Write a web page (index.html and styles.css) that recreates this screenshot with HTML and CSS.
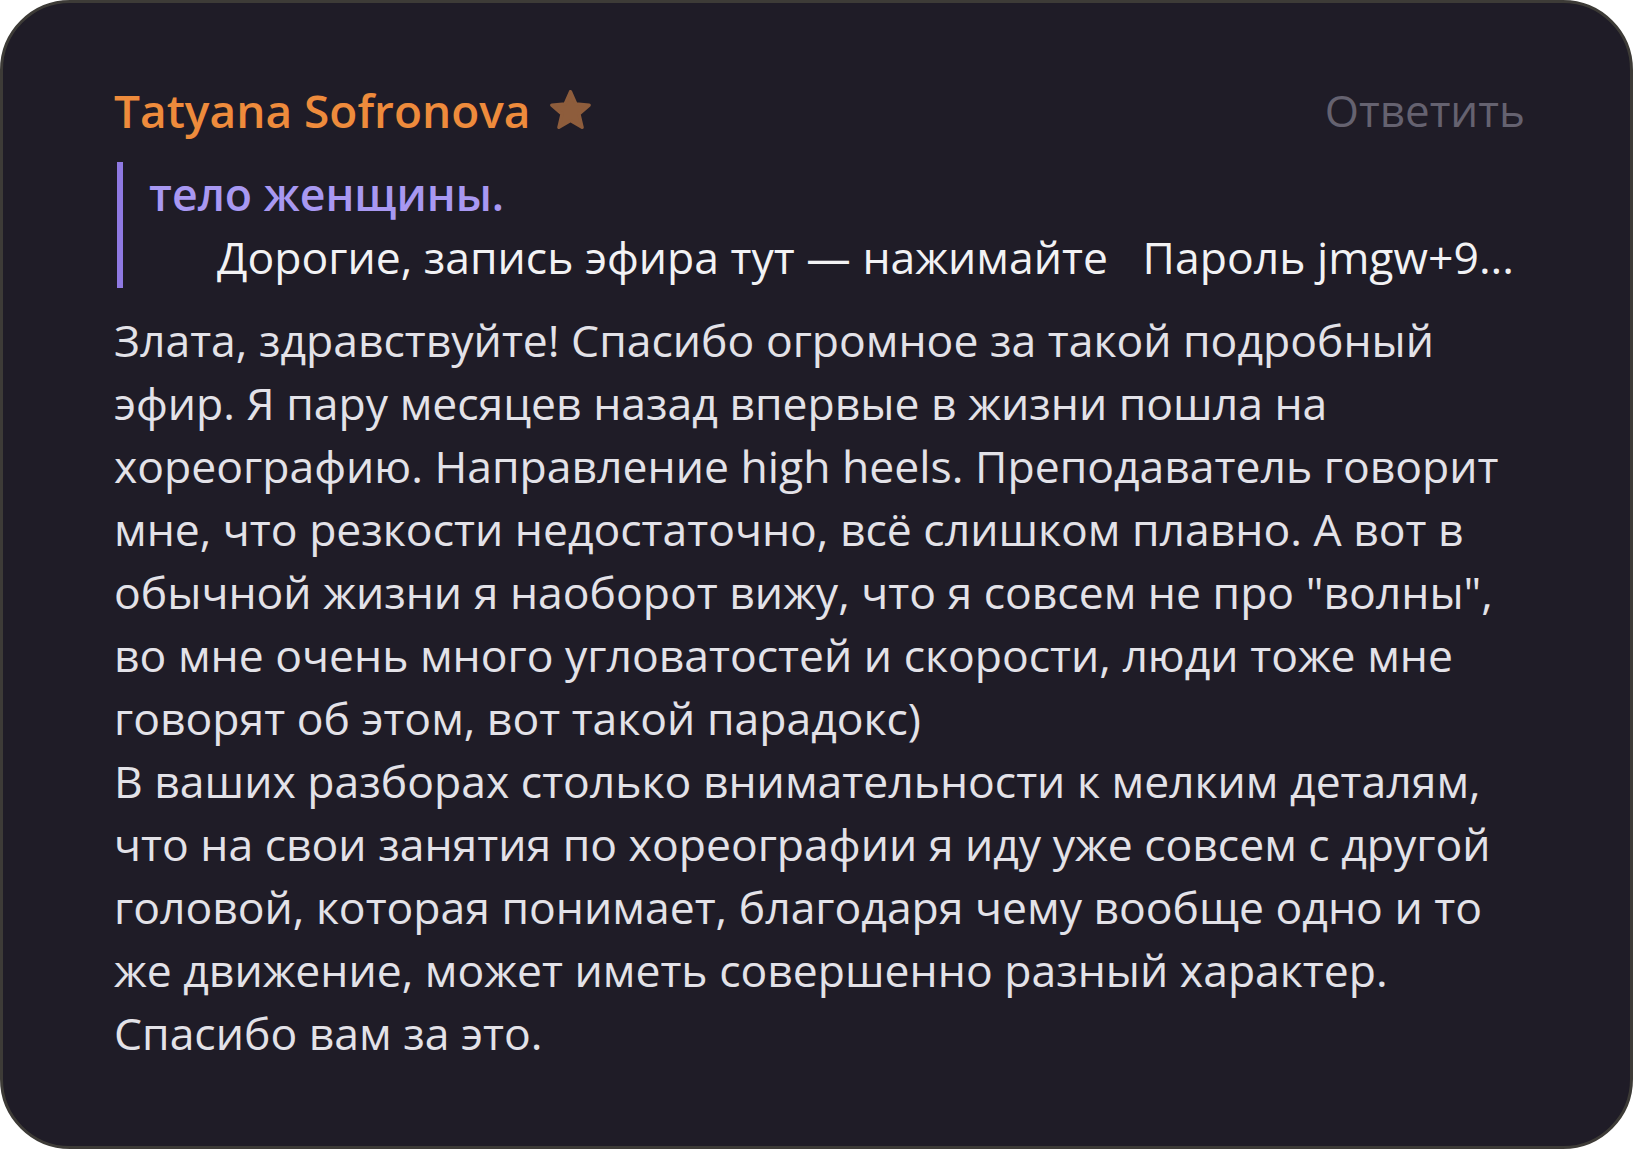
FILE: index.html
```html
<!DOCTYPE html>
<html lang="ru">
<head>
<meta charset="utf-8">
<link rel="stylesheet" href="styles.css">
</head>
<body>
<div class="card">
  <div class="head">
    <div class="author">
      <span class="name">Tatyana Sofronova</span>
      <svg class="star" viewBox="2.2 2.4 19.6 18.8" width="41" height="39"><path d="M12 3.2l2.6 5.9 6.4.6-4.9 4.3 1.5 6.4L12 17.1l-5.6 3.3 1.5-6.4L3 9.7l6.4-.6z" fill="#8e5d3c" stroke="#8e5d3c" stroke-width="1.6" stroke-linejoin="round"/></svg>
    </div>
    <span class="reply">Ответить</span>
  </div>
  <div class="quote">
    <div class="quote-title">тело женщины.</div>
    <div class="quote-text">Дорогие, запись эфира тут — нажимайте &nbsp; Пароль jmgw+9...</div>
  </div>
  <div class="body">Злата, здравствуйте! Спасибо огромное за такой подробный<br>эфир. Я пару месяцев назад впервые в жизни пошла на<br>хореографию. Направление high heels. Преподаватель говорит<br>мне, что резкости недостаточно, всё слишком плавно. А вот в<br>обычной жизни я наоборот вижу, что я совсем не про "волны",<br>во мне очень много угловатостей и скорости, люди тоже мне<br>говорят об этом, вот такой парадокс)<br>В ваших разборах столько внимательности к мелким деталям,<br>что на свои занятия по хореографии я иду уже совсем с другой<br>головой, которая понимает, благодаря чему вообще одно и то<br>же движение, может иметь совершенно разный характер.<br>Спасибо вам за это.</div>
</div>
</body>
</html>
```
FILE: styles.css
```css
html, body {
  margin: 0;
  padding: 0;
  background: #ffffff;
}
body {
  width: 1633px;
  height: 1149px;
  font-family: "Open Sans", "Noto Sans", sans-serif;
}
.card {
  box-sizing: border-box;
  width: 1633px;
  height: 1149px;
  background: #1f1c27;
  border: 3px solid #3d3b37;
  border-radius: 70px;
  padding: 79px 105px 0 111px;
}
.head {
  display: flex;
  justify-content: space-between;
  align-items: center;
  height: 56px;
}
.author {
  display: flex;
  align-items: center;
  gap: 19px;
}
.name {
  color: #ee8b3c;
  font-size: 46px;
  font-weight: 600;
}
.star { display: block; margin-top: -2px; }
.reply {
  color: #656270;
  font-size: 44px;
}
.quote {
  margin: 24px 0 0 3px;
  border-left: 6px solid #8f79e2;
  padding-left: 26px;
  line-height: 63px;
}
.quote-title {
  color: #a898f2;
  font-size: 44.7px;
  font-weight: 600;
}
.quote-text {
  color: #f2f2f4;
  font-size: 44.5px;
  padding-left: 68px;
}
.body {
  margin-top: 20px;
  color: #e3e2e8;
  font-size: 44.5px;
  line-height: 63px;
  white-space: nowrap;
}
```
